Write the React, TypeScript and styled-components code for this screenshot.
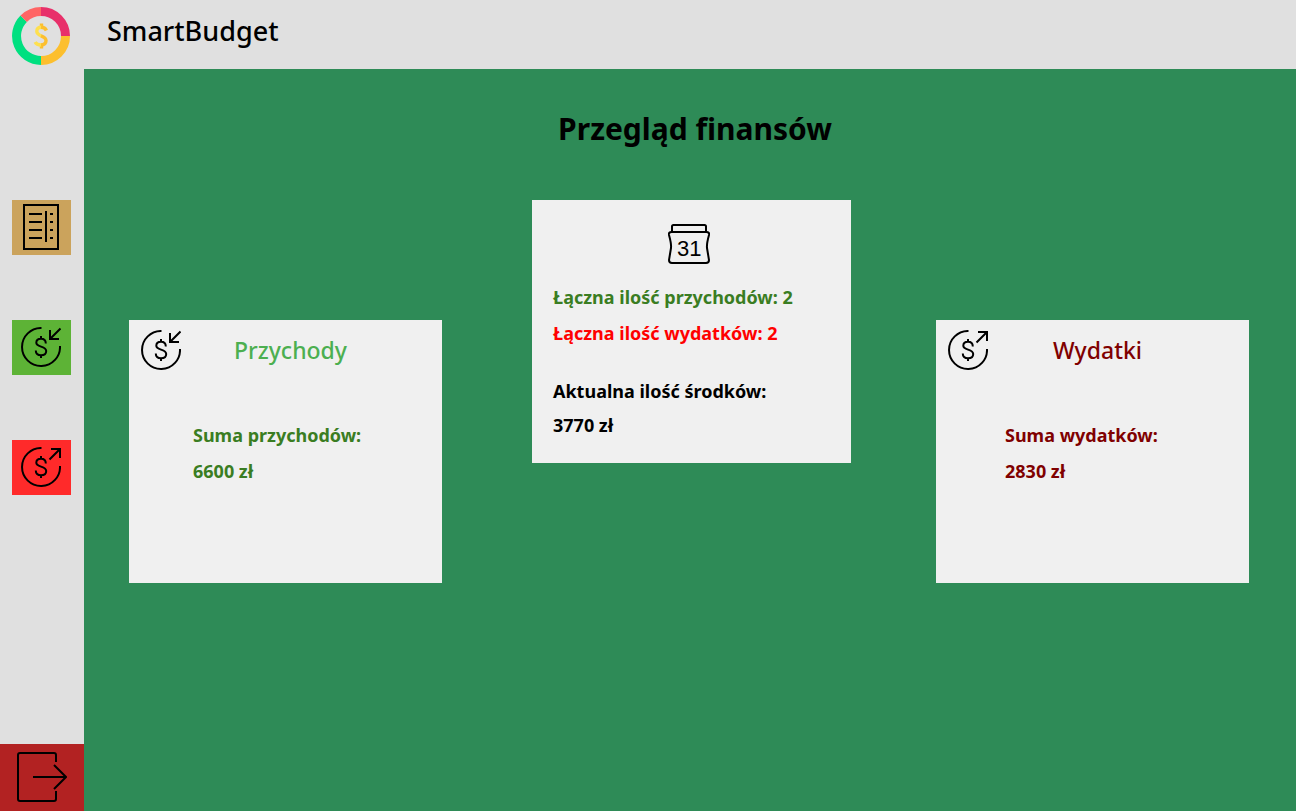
import React from "react";
import styled, { createGlobalStyle } from "styled-components";

const GlobalStyle = createGlobalStyle`
  * { box-sizing: border-box; }
  body {
    margin: 0;
    font-family: "Segoe UI", "Noto Sans", "Open Sans", sans-serif;
    color: #000;
  }
  h1, h2, p { margin: 0; }
`;

const Page = styled.div`
  display: flex;
  min-height: 100vh;
`;

const Sidebar = styled.aside`
  display: flex;
  flex-direction: column;
  width: 84px;
  flex-shrink: 0;
  background: #e0e0e0;
`;

const LogoLink = styled.a`
  display: block;
  height: 58px;
  margin: 7px 12px 135px;
`;

const Nav = styled.nav`
  display: flex;
  flex-direction: column;
  gap: 65px;
  padding: 0 12px;
  margin-bottom: auto;
`;

const NavButton = styled.button<{ $color: string }>`
  display: flex;
  justify-content: center;
  align-items: center;
  width: 59px;
  height: 55px;
  padding: 0 1px 1px 0;
  border: 0;
  background: ${(p) => p.$color};
  cursor: pointer;
`;

const LogoutButton = styled.button`
  display: flex;
  justify-content: center;
  align-items: center;
  height: 67px;
  padding: 0 0 1px;
  border: 0;
  background: #b22222;
  cursor: pointer;
`;

const Column = styled.div`
  display: flex;
  flex-direction: column;
  flex: 1;
  min-width: 0;
`;

const Header = styled.header`
  height: 69px;
  padding: 11px 23px;
  background: #e0e0e0;
`;

const Brand = styled.p`
  font-size: 27px;
  line-height: 40px;
  font-weight: 500;
`;

const Main = styled.main`
  flex: 1;
  padding: 36px 47px 48px 45px;
  background: #2e8b57;
`;

const Title = styled.h1`
  padding-left: 12px;
  font-size: 30px;
  line-height: 48px;
  text-align: center;
`;

const Cards = styled.div`
  display: grid;
  grid-template-columns: 313fr 494fr 313fr;
  align-items: start;
  margin-top: 47px;
`;

const Card = styled.section`
  min-height: 263px;
  margin-top: 120px;
  padding: 10px 12px;
  background: #f0f0f0;
`;

const SummaryCard = styled(Card)`
  margin: 0 85px 0 90px;
  padding: 24px 21px 20px;
`;

const CardHeader = styled.div`
  display: grid;
  grid-template-columns: 40px 1fr 30px;
  align-items: center;
  height: 40px;
`;

const CardTitle = styled.h2<{ $color: string }>`
  font-size: 23px;
  line-height: 32px;
  font-weight: 500;
  text-align: center;
  color: ${(p) => p.$color};
`;

const CardBody = styled.div<{ $indent: number }>`
  padding: 47px 0 0 ${(p) => p.$indent}px;
`;

const Line = styled.p<{ $color?: string }>`
  font-size: 18px;
  line-height: 36px;
  font-weight: 700;
  white-space: nowrap;
  color: ${(p) => p.$color || "#000"};
`;

const CalendarRow = styled.div`
  display: flex;
  justify-content: center;
  height: 40px;
  margin-bottom: 15px;
  padding-right: 5px;
`;

const Balance = styled.div`
  margin-top: 23px;

  ${Line} {
    line-height: 34px;
  }
`;

const Stroke = styled.svg`
  display: block;
  fill: none;
  stroke: #000;
  stroke-width: 2;
`;

const Digits = styled.text`
  font-family: "Liberation Sans", Arial, sans-serif;
  font-size: 22px;
  fill: #000;
  stroke: none;
`;

const Logo = () => (
  <svg width="58" height="58" viewBox="0 0 58 58" fill="none" strokeWidth="9" aria-hidden="true">
    <path d="M29 4.500A24.500 24.500 0 0 1 53.500 29" stroke="#e8306a" />
    <path d="M53.500 29A24.500 24.500 0 0 1 29 53.500" stroke="#fcbf2e" />
    <path d="M29 53.500A24.500 24.500 0 0 1 11.700 11.700" stroke="#00e080" />
    <path d="M11.700 11.700A24.500 24.500 0 0 1 29 4.500" stroke="#ff6565" />
    <g strokeWidth="3.400">
      <path d="M29.500 16.500V20M29.500 37.500V41.500" stroke="#fcbf2e" />
      <path d="M29.500 20.300C25.800 20.300 24.800 22.500 24.800 24.300C24.800 27 27 28 29.500 29M23.200 35C24.200 37.400 26.500 38 29.500 38" stroke="#fee04e" />
      <path d="M29 20.300C31.800 20.300 33.500 21.500 34.400 23.500M29 28.800C31.500 29.700 34 30.800 34 33.600C34 36.800 31.800 38 29 38" stroke="#fcbf2e" />
    </g>
  </svg>
);

const LedgerIcon = () => (
  <Stroke width="36" height="46" viewBox="0 0 36 46" aria-hidden="true">
    <path d="M1 1H35V45H1ZM6 10H19M6 18H19M6 26H19M6 34H19M23 7V38M27 10H30M27 18H30M27 26H30M27 34H30" />
  </Stroke>
);

const MoneyIcon = ({ outgoing = false }: { outgoing?: boolean }) => (
  <Stroke width="40" height="40" viewBox="0 0 40 40" aria-hidden="true">
    <path d="M20.500 1A19 19 0 1 0 39 19" />
    <path d="M20 9V12M20 28V31M24.800 16.500C24.800 13.600 23 11.800 20 11.800S15.300 13.600 15.300 15.800C15.300 20.500 25.200 18.800 25.200 24C25.200 26.800 23 28.300 20 28.300S14.800 26.600 14.800 23.500" />
    <path d={outgoing ? "M30 2H39V11M39 2L28.500 12.500" : "M29 3V12H38M29 12L39.500 1.500"} />
  </Stroke>
);

const LogoutIcon = () => (
  <Stroke width="50" height="50" viewBox="0 0 50 50" aria-hidden="true">
    <path d="M39 10V3A2 2 0 0 0 37 1H3A2 2 0 0 0 1 3V47A2 2 0 0 0 3 49H37A2 2 0 0 0 39 47V39" />
    <path d="M16 25H49M37 13L49 25L37 37" />
  </Stroke>
);

const CalendarIcon = () => (
  <Stroke width="42" height="40" viewBox="0 0 42 40" aria-hidden="true">
    <path d="M4 8V2.500Q4 1 5.500 1H36.500Q38 1 38 2.500V8" />
    <path d="M3.500 8H38.500Q41.500 8 41 11Q38.500 20 39 24L41 36Q41 39 38 39H4Q1 39 1 36L3 24Q3.500 20 1 11Q.5 8 3.500 8Z" />
    <Digits x="9" y="32">31</Digits>
  </Stroke>
);

export default function App() {
  return (
    <>
      <GlobalStyle />
      <Page>
        <Sidebar>
          <LogoLink href="#" aria-label="SmartBudget">
            <Logo />
          </LogoLink>
          <Nav>
            <NavButton $color="#cba35c" aria-label="Przegląd">
              <LedgerIcon />
            </NavButton>
            <NavButton $color="#5db336" aria-label="Przychody">
              <MoneyIcon />
            </NavButton>
            <NavButton $color="#ff2a2a" aria-label="Wydatki">
              <MoneyIcon outgoing />
            </NavButton>
          </Nav>
          <LogoutButton aria-label="Wyloguj">
            <LogoutIcon />
          </LogoutButton>
        </Sidebar>
        <Column>
          <Header>
            <Brand>SmartBudget</Brand>
          </Header>
          <Main>
            <Title>Przegląd finansów</Title>
            <Cards>
              <Card>
                <CardHeader>
                  <MoneyIcon />
                  <CardTitle $color="#4caf50">Przychody</CardTitle>
                </CardHeader>
                <CardBody $indent={52}>
                  <Line $color="#3a7d22">Suma przychodów:</Line>
                  <Line $color="#3a7d22">6600 zł</Line>
                </CardBody>
              </Card>
              <SummaryCard>
                <CalendarRow>
                  <CalendarIcon />
                </CalendarRow>
                <Line $color="#3a7d22">Łączna ilość przychodów: 2</Line>
                <Line $color="#ff0000">Łączna ilość wydatków: 2</Line>
                <Balance>
                  <Line>Aktualna ilość środków:</Line>
                  <Line>3770 zł</Line>
                </Balance>
              </SummaryCard>
              <Card>
                <CardHeader>
                  <MoneyIcon outgoing />
                  <CardTitle $color="#800000">Wydatki</CardTitle>
                </CardHeader>
                <CardBody $indent={57}>
                  <Line $color="#800000">Suma wydatków:</Line>
                  <Line $color="#800000">2830 zł</Line>
                </CardBody>
              </Card>
            </Cards>
          </Main>
        </Column>
      </Page>
    </>
  );
}
